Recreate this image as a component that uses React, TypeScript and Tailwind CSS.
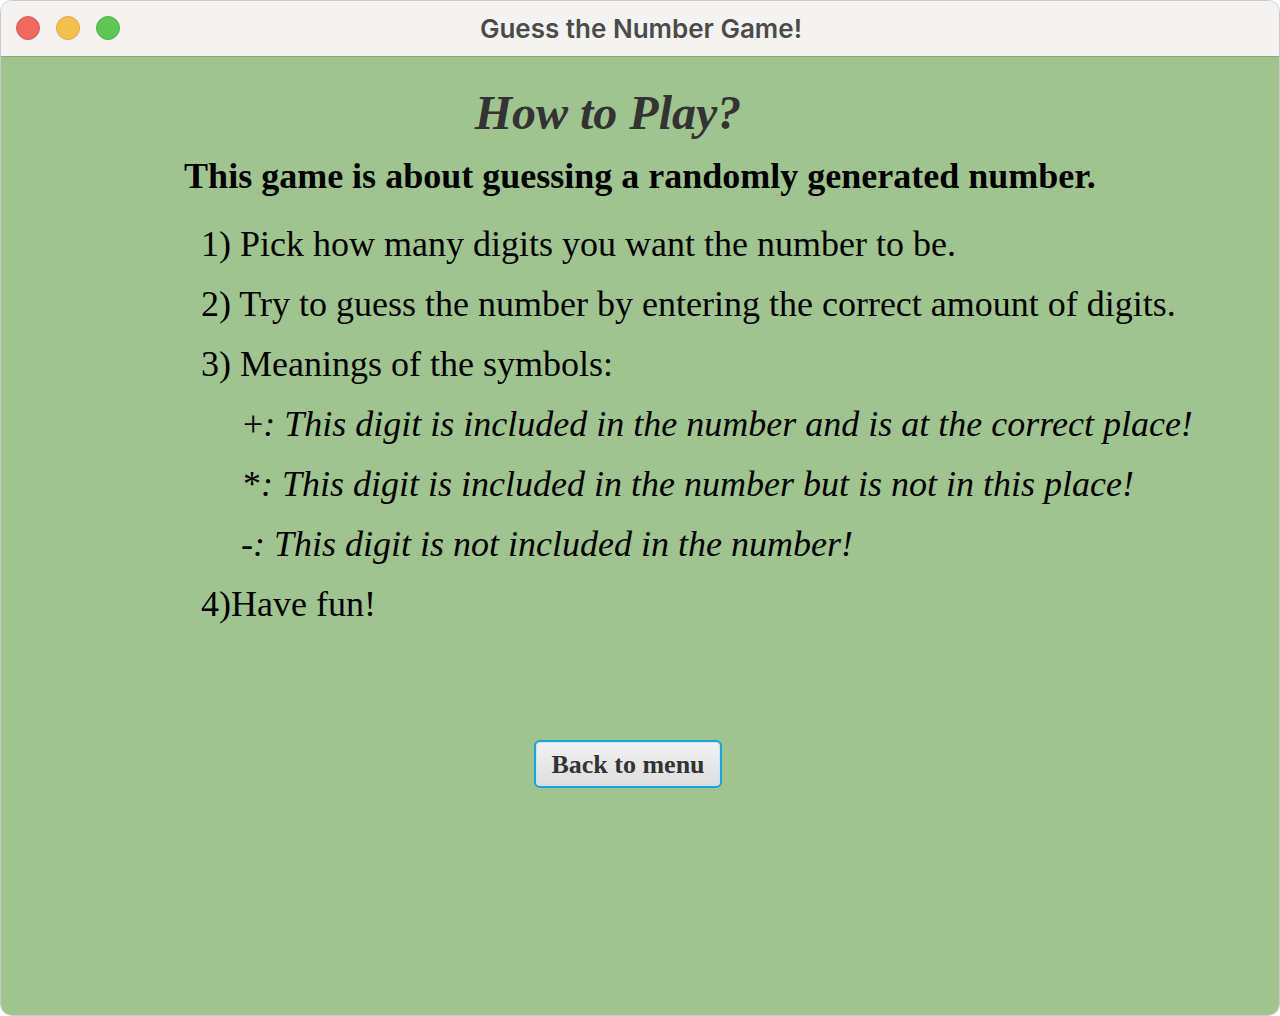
import React from 'react';

const serif = { fontFamily: '"Liberation Serif", "Times New Roman", serif' };

export default function App() {
  return (
    <div className="w-[1280px] h-[1016px] bg-white">
      <div className="flex h-full flex-col overflow-hidden rounded-[12px] border border-[#c9c9c9]">
        {/* Title bar */}
        <div className="relative flex h-[56px] shrink-0 items-center justify-center border-b border-[#86a977] bg-[#f4f3f1]">
          <div className="absolute left-[15px] top-[15px] flex gap-[16px]">
            <span className="h-[24px] w-[24px] rounded-full border border-[#dc5b52] bg-[#ee6a5f]" />
            <span className="h-[24px] w-[24px] rounded-full border border-[#dfa93f] bg-[#f5bf4f]" />
            <span className="h-[24px] w-[24px] rounded-full border border-[#51b04a] bg-[#61c554]" />
          </div>
          <span className="pl-[2px] font-['Inter',sans-serif] text-[26px] font-semibold text-[#4b4b4b]">
            Guess the Number Game!
          </span>
        </div>

        {/* Content */}
        <div className="flex flex-1 flex-col bg-[#a0c490]" style={serif}>
          <h1 className="mt-[26px] pr-[64px] text-center text-[48px] font-bold italic leading-[60px] text-[#333333]">
            How to Play?
          </h1>
          <p className="mt-[13px] text-center text-[36px] font-bold leading-[40px] text-black">
            This game is about guessing a randomly generated number.
          </p>
          <div className="mt-[28px] flex flex-col gap-[20px] pl-[200px] text-[36px] leading-[40px] text-black">
            <p>1) Pick how many digits you want the number to be.</p>
            <p>2) Try to guess the number by entering the correct amount of digits.</p>
            <p>3) Meanings of the symbols:</p>
            <p className="pl-[42px]">+<i>: This digit is included in the number and is at the correct place!</i></p>
            <p className="pl-[42px]">*<i>: This digit is included in the number but is not in this place!</i></p>
            <p className="pl-[40px]">-<i>: This digit is not included in the number!</i></p>
            <p>4)Have fun!</p>
          </div>
          <div className="mt-[116px] flex justify-center pr-[24px]">
            <button className="h-[48px] w-[188px] rounded-[6px] border-[2px] border-[#1ba3da] bg-gradient-to-b from-[#f2f2f2] to-[#dedede] text-[26px] font-bold text-[#333333] shadow-[inset_0_0_0_1px_#cfe6f0]">
              Back to menu
            </button>
          </div>
        </div>
      </div>
    </div>
  );
}
